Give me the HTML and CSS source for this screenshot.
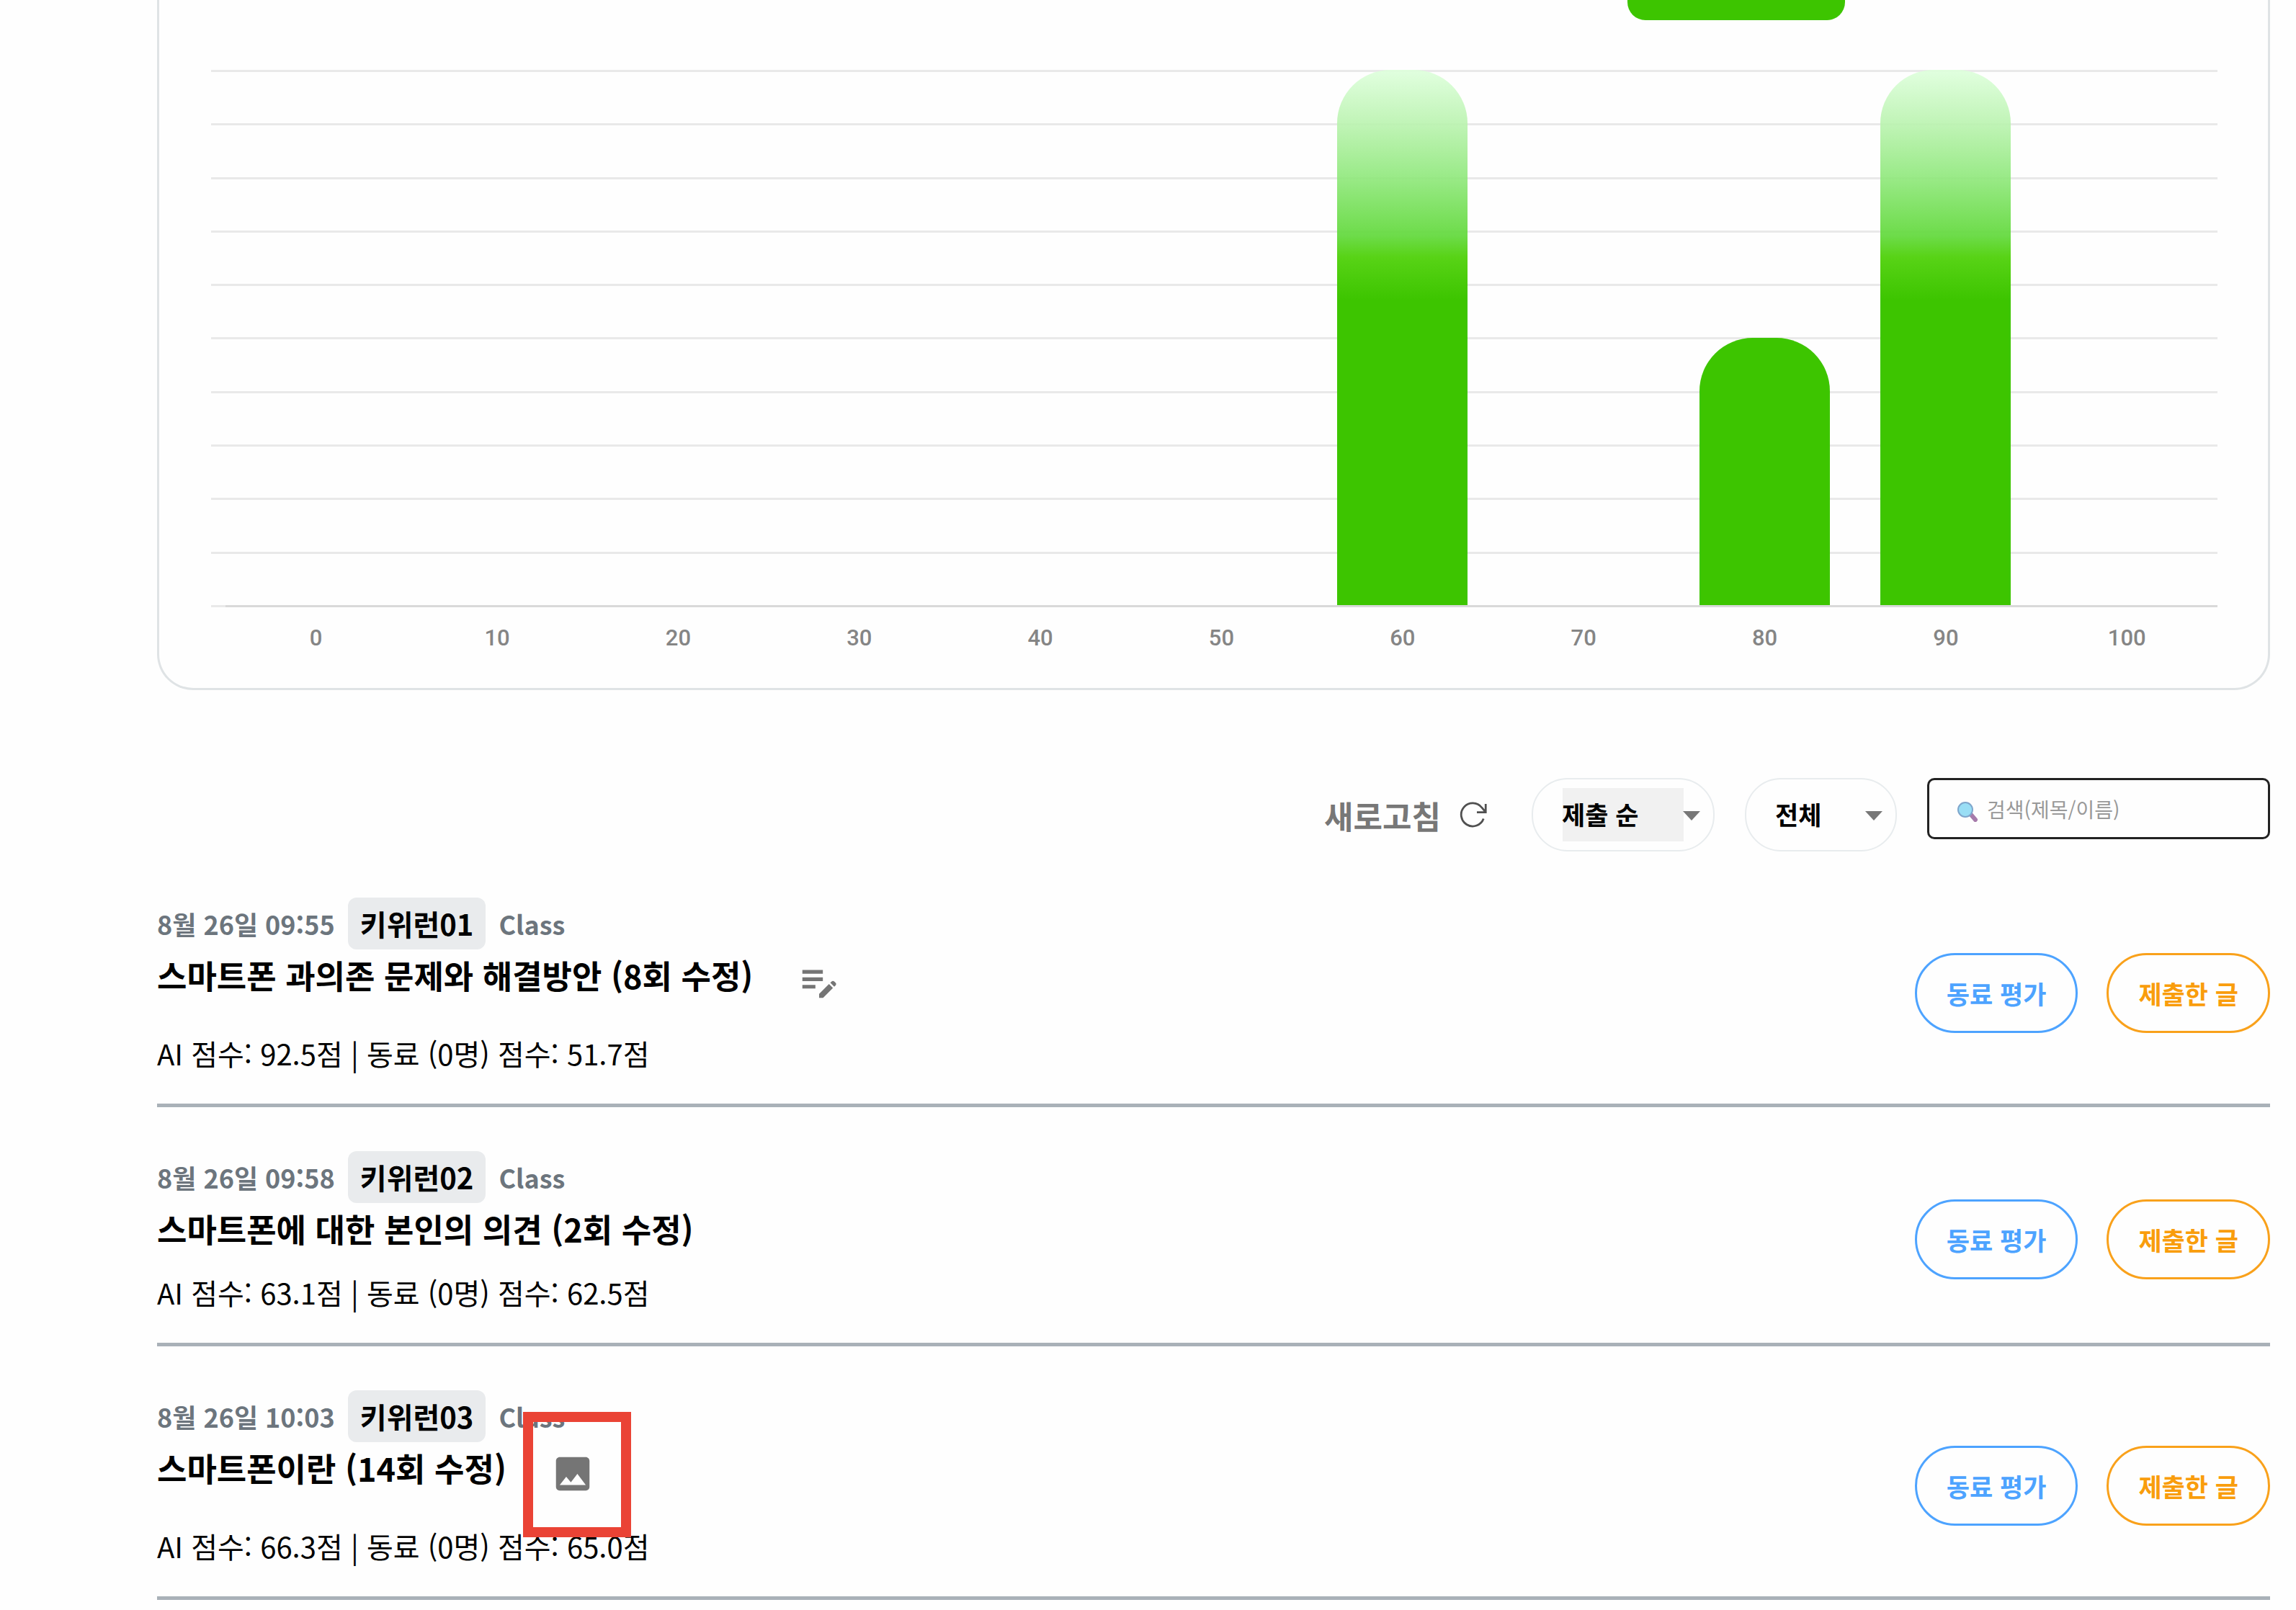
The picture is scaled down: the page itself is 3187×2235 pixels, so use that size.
FILE: index.html
```html
<!DOCTYPE html>
<html lang="ko">
<head>
    <meta charset="UTF-8">
    <title>제출 현황</title>
    <link rel="stylesheet" href="styles.css">
</head>

<body>
    <div class="page">
        <div class="chart-card">
            <button type="button" class="chart-button" aria-label="chart"></button>
            <div class="plot">
                <div class="grid">
                    <div></div><div></div><div></div><div></div><div></div>
                    <div></div><div></div><div></div><div></div><div></div>
                </div>
                <div class="bars">
                    <div class="col"></div>
                    <div class="col"></div>
                    <div class="col"></div>
                    <div class="col"></div>
                    <div class="col"></div>
                    <div class="col"></div>
                    <div class="col"><div class="bar fade" style="height: 100%"></div></div>
                    <div class="col"></div>
                    <div class="col"><div class="bar" style="height: 50%"></div></div>
                    <div class="col"><div class="bar fade" style="height: 100%"></div></div>
                    <div class="col"></div>
                </div>
            </div>
            <div class="labels">
                <span>0</span><span>10</span><span>20</span><span>30</span><span>40</span><span>50</span><span>60</span><span>70</span><span>80</span><span>90</span><span>100</span>
            </div>
        </div>

        <div class="toolbar">
            <button type="button" class="refresh">
                새로고침
                <svg viewBox="0 0 16 16" class="refresh-icon"><path d="M13.3 9.8A6.4 6.4 0 1 1 12.3 3.6L14.5 6.2M14.5 1.6V6.2H9.6" fill="none" stroke="#505050" stroke-width="1.1"/></svg>
            </button>
            <div class="select-box">
                <select class="sort focused" aria-label="정렬">
                    <option>제출 순</option>
                    <option>이름 순</option>
                </select>
            </div>
            <div class="select-box">
                <select class="filter" aria-label="구분">
                    <option>전체</option>
                </select>
            </div>
            <div class="search-box">
                <svg viewBox="0 0 30 28" class="search-icon">
                    <path d="M20 18L26 25" stroke="#a67bab" stroke-width="6" stroke-linecap="round"/>
                    <circle cx="12" cy="11" r="10" fill="#99def5" stroke="#7fa6cc" stroke-width="2"/>
                </svg>
                <input type="text" class="search" placeholder="검색(제목/이름)" aria-label="검색">
            </div>
        </div>

        <div class="list">
            <div class="item">
                <div class="info">
                    <div class="meta">
                        <span>8월 26일 09:55</span>
                        <span class="name">키위런01</span>
                        <span>Class</span>
                    </div>
                    <div class="title">
                        <h2>스마트폰 과의존 문제와 해결방안 (8회 수정)</h2>
                        <button type="button" class="icon-button" aria-label="메모">
                            <svg viewBox="0 0 24 24"><path d="M3 10h11v2H3v-2zm0-2h11V6H3v2zm0 8h7v-2H3v2zm15.01-3.13l.71-.71c.39-.39 1.02-.39 1.41 0l.71.71c.39.39.39 1.02 0 1.41l-.71.71-2.12-2.12zm-.71.71l-5.3 5.3V21h2.12l5.3-5.3-2.12-2.12z"/></svg>
                        </button>
                    </div>
                    <p class="score">AI 점수: 92.5점 | 동료 (0명) 점수: 51.7점</p>
                </div>
                <div class="actions">
                    <button type="button" class="pill blue">동료 평가</button>
                    <button type="button" class="pill orange">제출한 글</button>
                </div>
            </div>

            <div class="item">
                <div class="info">
                    <div class="meta">
                        <span>8월 26일 09:58</span>
                        <span class="name">키위런02</span>
                        <span>Class</span>
                    </div>
                    <div class="title">
                        <h2>스마트폰에 대한 본인의 의견 (2회 수정)</h2>
                    </div>
                    <p class="score">AI 점수: 63.1점 | 동료 (0명) 점수: 62.5점</p>
                </div>
                <div class="actions">
                    <button type="button" class="pill blue">동료 평가</button>
                    <button type="button" class="pill orange">제출한 글</button>
                </div>
            </div>

            <div class="item">
                <div class="info">
                    <div class="meta">
                        <span>8월 26일 10:03</span>
                        <span class="name">키위런03</span>
                        <span>Class</span>
                    </div>
                    <div class="title">
                        <h2>스마트폰이란 (14회 수정)</h2>
                        <button type="button" class="icon-button marked" aria-label="이미지">
                            <svg viewBox="0 0 24 24"><path d="M21 19V5c0-1.1-.9-2-2-2H5c-1.1 0-2 .9-2 2v14c0 1.1.9 2 2 2h14c1.1 0 2-.9 2-2zM8.5 13.5l2.5 3.01L14.5 12l4.5 6H5l3.500-4.500z"/></svg>
                        </button>
                    </div>
                    <p class="score">AI 점수: 66.3점 | 동료 (0명) 점수: 65.0점</p>
                </div>
                <div class="actions">
                    <button type="button" class="pill blue">동료 평가</button>
                    <button type="button" class="pill orange">제출한 글</button>
                </div>
            </div>
        </div>
    </div>
</body>
</html>
```

FILE: styles.css
```css
* {
    margin: 0;
    padding: 0;
    box-sizing: border-box;
    font-family: "Noto Sans CJK KR", sans-serif;
}

body {
    background: #fefefe;
    color: #000;
}

button {
    background: transparent;
    border: none;
    cursor: pointer;
}

.page {
    padding: 0 36px 0 218px;
}

/* chart */
.chart-card {
    border: 3px solid #dfe3e5;
    border-top: none;
    border-radius: 0 0 50px 50px;
    padding: 0 70px 45px 72px;
}
.chart-button {
    display: block;
    width: 302px;
    height: 28px;
    margin: 0 517px 69px auto;
    background: #3dc500;
    border-radius: 0 0 25px 25px;
}
.plot {
    position: relative;
    height: 746px;
    border-bottom: 3px solid #e9e9e9;
}
.grid {
    height: 100%;
    display: flex;
    flex-direction: column;
}
.grid div {
    flex: 1;
    border-top: 3px solid #e9e9e9;
}
.bars {
    position: absolute;
    top: 0;
    bottom: -3px;
    left: 20px;
    right: 0;
    display: flex;
    border-bottom: 3px solid #d9d9d9;
}
.col {
    flex: 1;
    display: flex;
    align-items: flex-end;
    justify-content: center;
}
.bar {
    width: 72%;
    background: #3dc500;
    border-radius: 74px 74px 0 0;
}
.fade {
    background: linear-gradient(rgba(222, 255, 220, 0.9), rgba(186, 243, 175, 0.9) 10%, rgba(143, 232, 123, 0.9) 20%, rgba(98, 217, 60, 0.93) 31%, #58d316 35%, #3dc500 43%);
}
.labels {
    display: flex;
    padding-left: 20px;
}
.labels span {
    flex: 1;
    padding-top: 19px;
    text-align: center;
    font-family: Roboto, sans-serif;
    font-size: 31px;
    font-weight: 500;
    line-height: 48px;
    color: #858585;
}

/* toolbar */
.toolbar {
    display: flex;
    justify-content: flex-end;
    align-items: flex-start;
    gap: 42px;
    margin-top: 122px;
}
.refresh {
    display: flex;
    align-items: center;
    gap: 26px;
    height: 104px;
    margin-right: 18px;
    font-size: 44px;
    font-weight: bold;
    color: #777;
}
.refresh-icon {
    width: 40px;
    height: 40px;
}
.select-box {
    position: relative;
}
.select-box::after {
    content: '';
    position: absolute;
    top: 46px;
    right: 20px;
    border: 12px solid transparent;
    border-top: 13px solid #777;
    border-bottom: none;
    pointer-events: none;
}
select {
    appearance: none;
    height: 102px;
    padding: 10px 40px 14px;
    border: 2px solid #e8ecee;
    border-radius: 50px;
    background: transparent;
    font-size: 35px;
    font-weight: bold;
    color: #000;
}
.sort {
    width: 254px;
}
.filter {
    width: 211px;
}
.focused {
    background: linear-gradient(#f1f1f1, #f1f1f1) center / calc(100% - 82px) 74px no-repeat;
}
.search-box {
    position: relative;
    width: 476px;
}
.search-icon {
    position: absolute;
    left: 41px;
    top: 33px;
    width: 30px;
    height: 28px;
}
.search {
    width: 100%;
    height: 85px;
    padding: 0 20px 0 80px;
    border: 3px solid #222;
    border-radius: 10px;
    background: transparent;
    font-size: 28px;
}
.search::placeholder {
    color: #999;
}

/* list */
.list {
    padding-top: 1px;
}
.item {
    display: flex;
    justify-content: space-between;
    align-items: center;
    padding: 61px 0 22px;
    border-bottom: 5px solid #a9b1b8;
}
.info {
    padding-bottom: 14px;
}
.meta {
    display: flex;
    align-items: center;
    gap: 18px;
    font-size: 36px;
    font-weight: bold;
    color: #6c757d;
}
.name {
    padding: 0 17px;
    border-radius: 12px;
    background: #e9ebed;
    font-size: 40px;
    line-height: 72px;
    color: #000;
}
.title {
    display: flex;
    align-items: flex-start;
}
.title h2 {
    font-size: 45px;
    font-weight: bold;
    line-height: 72px;
}
.icon-button {
    position: relative;
    height: 88px;
    margin: 0 0 4px 41px;
    padding: 0 20px;
}
.icon-button svg {
    display: block;
    width: 62px;
    height: 62px;
    fill: #757575;
}
.marked::after {
    content: '';
    position: absolute;
    top: -42px;
    left: -18px;
    width: 150px;
    height: 174px;
    box-sizing: border-box;
    border: 14px solid #ea4335;
}
.score {
    margin-top: 18px;
    font-size: 40px;
    line-height: 68px;
}
.actions {
    display: flex;
    gap: 40px;
}
.pill {
    height: 111px;
    padding: 0 41px;
    border: 3px solid;
    border-radius: 56px;
    font-size: 35px;
    font-weight: bold;
}
.blue {
    color: #4da3ff;
    border-color: #4da3ff;
}
.orange {
    color: #f99d0c;
    border-color: #f9a11b;
}
```
